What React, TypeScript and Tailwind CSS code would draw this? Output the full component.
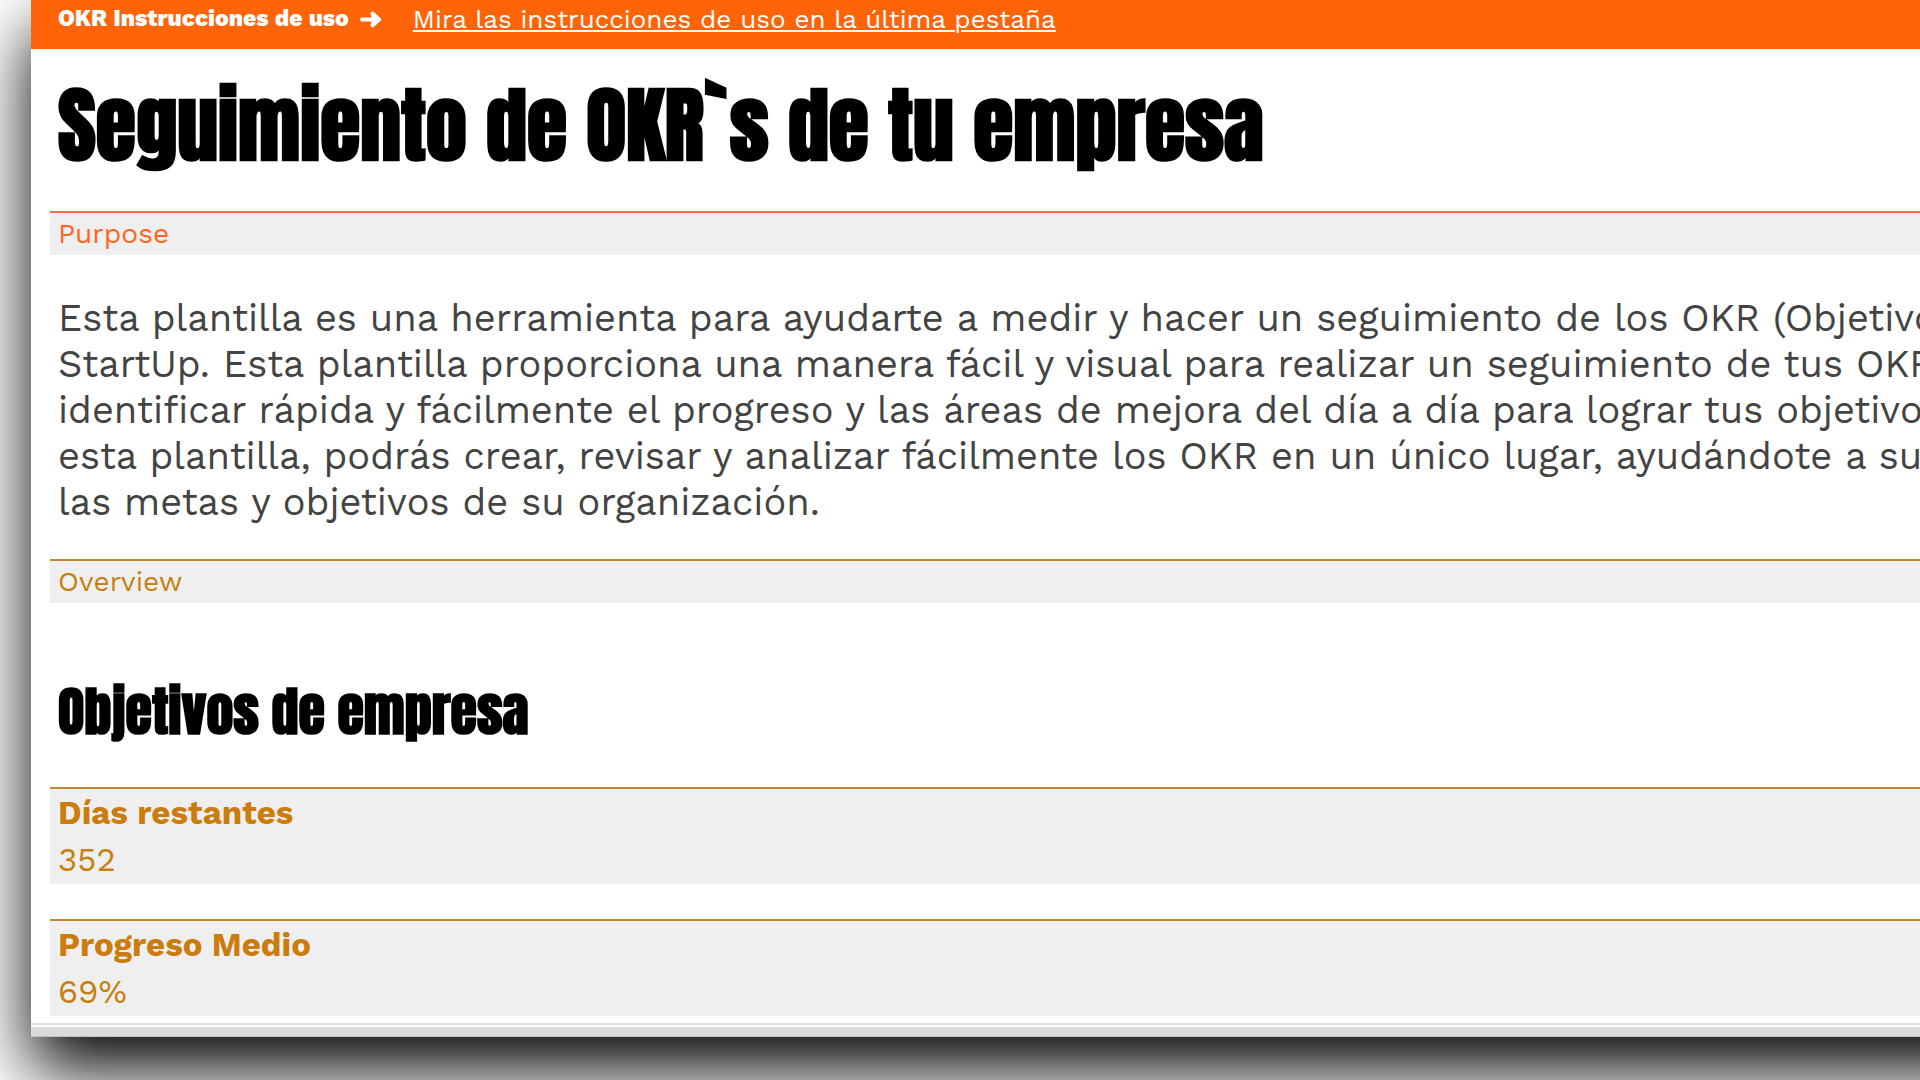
interface Stat {
  label: string;
  value: string;
}

const STATS: Stat[] = [
  { label: "Días restantes", value: "352" },
  { label: "Progreso Medio", value: "69%" },
];

const PURPOSE_LINES = [
  "Esta plantilla es una herramienta para ayudarte a medir y hacer un seguimiento de los OKR (Objetivos",
  "StartUp. Esta plantilla proporciona una manera fácil y visual para realizar un seguimiento de tus OKR",
  "identificar rápida y fácilmente el progreso y las áreas de mejora del día a día para lograr tus objetivos",
  "esta plantilla, podrás crear, revisar y analizar fácilmente los OKR en un único lugar, ayudándote a superar",
  "las metas y objetivos de su organización.",
];

function Banner() {
  return (
    <header className="flex h-[49px] items-start bg-[#ff6408] pl-[27px] leading-[38px] whitespace-nowrap text-white">
      <span className="flex items-center gap-[11px] text-[23px] font-extrabold">
        OKR Instrucciones de uso
        <svg viewBox="0 0 22 18" className="h-[18px] w-[22px]" fill="none" stroke="currentColor" strokeWidth="4">
          <path d="M2 9.5h14" strokeLinecap="round" />
          <path d="M12.5 3.5l6.5 6l-6.5 6l2-6z" fill="currentColor" strokeLinecap="round" strokeLinejoin="round" />
        </svg>
      </span>
      <a href="#instrucciones" className="ml-[31px] text-[26px] underline decoration-2 underline-offset-2">
        Mira las instrucciones de uso en la última pestaña
      </a>
    </header>
  );
}

function StatCard({ label, value }: Stat) {
  return (
    <div className="border-t-2 border-[#c08a2a] bg-[#efefef] pb-px pl-2 text-[33px] leading-[47px] text-[#c5800e]">
      <dt className="font-bold text-[#cb7c0c]">{label}</dt>
      <dd>{value}</dd>
    </div>
  );
}

export default function App() {
  return (
    <div className="h-screen overflow-hidden bg-white pl-[31px] font-['Work_Sans',Inter,sans-serif]">
      {/* The sheet runs past the right edge, so its shadow has no corner there */}
      <div className="-mr-32 bg-white shadow-[0_32px_66px_#000]">
        <Banner />
        <main className="pl-[19px]">
          <h1 className="pt-[27px] pb-[35px] pl-2 font-['Anton','Open_Sans_Condensed',sans-serif] text-[82px] leading-[100px] font-bold whitespace-nowrap text-black">
            Seguimiento de OKR`s de tu empresa
          </h1>

          <section id="purpose">
            <h2 className="border-t-2 border-[#fb6b45] bg-[#efefef] pb-px pl-2 text-[28px] leading-[41px] text-[#ff661c]">
              Purpose
            </h2>
            <p className="pt-[40px] pb-[34px] pl-2 text-[38px] leading-[46px] whitespace-nowrap text-[#434343]">
              {PURPOSE_LINES.map((line) => (
                <span key={line} className="block">
                  {line}
                </span>
              ))}
            </p>
          </section>

          <section id="overview">
            <h2 className="border-t-2 border-[#c08a2a] bg-[#efefef] pb-px pl-2 text-[28px] leading-[41px] text-[#c5800e]">
              Overview
            </h2>
            <h3 className="pt-[68px] pb-[36px] pl-2 font-['Anton','Open_Sans_Condensed',sans-serif] text-[54px] leading-[80px] font-bold text-black">
              Objetivos de empresa
            </h3>
            <dl className="flex flex-col gap-[35px]">
              {STATS.map((stat) => (
                <StatCard key={stat.label} {...stat} />
              ))}
            </dl>
          </section>
        </main>
        <footer className="mt-[7px] border-t-2 border-[#dcdddf] pt-[2px]">
          <div className="h-[10px] border-b border-[#bfc1c4] bg-[#d9dade]" />
        </footer>
      </div>
    </div>
  );
}
